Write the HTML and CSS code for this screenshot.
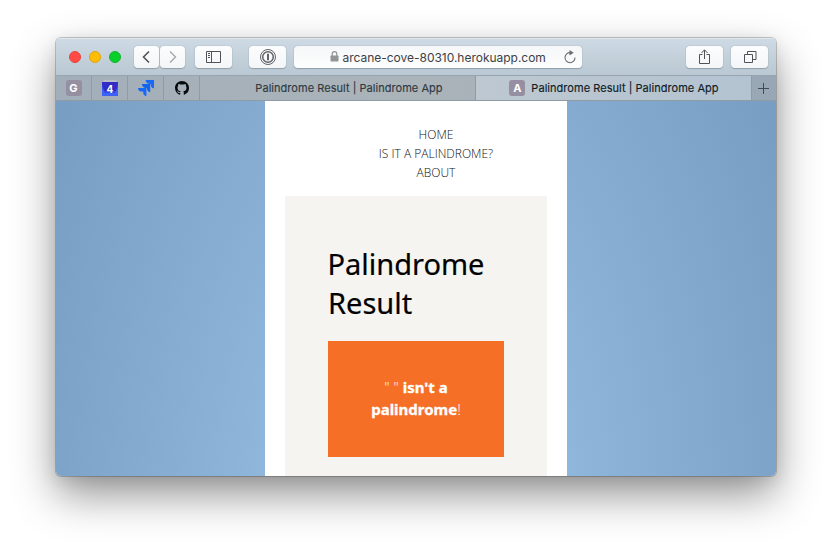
FILE: index.html
```html
<!DOCTYPE html>
<html lang="en">
<head>
<meta charset="utf-8">
<title>Palindrome Result | Palindrome App</title>
<link rel="stylesheet" href="styles.css">
</head>
<body>
<div class="window">
  <header class="toolbar">
    <div class="lights"><i class="light red"></i><i class="light yellow"></i><i class="light green"></i></div>
    <div class="nav-buttons">
      <span class="btn small"><svg width="26" height="22" fill="none" stroke="#4b4d50" stroke-width="1.5"><path d="M15 5.500 9.500 11l5.500 5.500"/></svg></span>
      <span class="btn small"><svg width="26" height="22" fill="none" stroke="#a6a8aa" stroke-width="1.400"><path d="M10 5.500 15.500 11 10 16.500"/></svg></span>
    </div>
    <span class="btn side"><svg width="37" height="22" fill="none" stroke="#505255"><path d="M11.500 5.500h14v11h-14zM16.500 5.500v11M13 7.500h2M13 9.500h2M13 11.500h2"/></svg></span>
    <span class="btn lock1"><svg width="37" height="22" fill="none" stroke="#606265"><circle cx="19" cy="11" r="7.500"/><circle cx="19" cy="11" r="5.300" stroke-width="1.500"/><path d="M19 7.800v6.400" stroke-width="2"/></svg></span>
    <div class="address">
      <svg class="padlock" width="9" height="11"><rect x=".5" y="4.500" width="8" height="6" rx=".7" fill="#929496"/><path d="M2.200 5V3a2.300 2.300 0 0 1 4.600 0v2" fill="none" stroke="#929496" stroke-width="1.200"/></svg>
      <span class="url">arcane-cove-80310.herokuapp.com</span>
      <svg class="reload" width="12" height="14"><path d="M6.500 2.700A5 5 0 1 0 11 7.500" fill="none" stroke="#696c6f" stroke-width="1.100"/><path d="M5.500 0l4.200 2.700L5.500 5.400z" fill="#696c6f"/></svg>
    </div>
    <div class="right-buttons">
      <span class="btn"><svg width="37" height="22" fill="none" stroke="#505255"><path d="M16.500 8.500h-3v9h10v-9h-3M18.500 13V4M15.500 7l3-3.200 3 3.200"/></svg></span>
      <span class="btn"><svg width="37" height="22" fill="none" stroke="#505255"><path d="M13.500 8.500h8v8h-8zM16.500 8V5.500h8.500v8h-3"/></svg></span>
    </div>
  </header>
  <nav class="tabs">
    <div class="pin"><span class="letter">G</span></div>
    <div class="pin"><svg width="16" height="16"><path d="M0 2h16v14H0z" fill="#3548e8"/><path d="M0 2h16l-2 9H2z" fill="#342bc5"/><path d="M0 16V7l3 6h10l3-6v9z" fill="#3e62f5"/><path d="M2 0h12l1 2H1z" fill="#b8bec8"/><text x="8" y="12.600" text-anchor="middle" class="four">4</text></svg></div>
    <div class="pin"><svg width="16" height="16" fill="#1769fb"><path d="M7.600 0H16v8.400c-1.900-.2-3.200-1.500-3.200-3.700V3.900h-1.200C9.200 3.900 7.700 2.300 7.600 0z"/><path d="M3.900 4h8.300v8.300c-1.900-.2-3.200-1.500-3.200-3.700V7.900H7.800C5.500 7.900 4 6.400 3.900 4z" fill="#1263ee"/><path d="M0 7.900h8.400V16c-1.900-.2-3.200-1.400-3.200-3.600v-.8H4C1.600 11.600.100 10.200 0 7.900z"/></svg></div>
    <div class="pin"><svg width="14" height="14" viewBox="0 0 16 16"><path fill="#080b0e" d="M8 0C3.580 0 0 3.580 0 8c0 3.540 2.290 6.530 5.470 7.590.4.070.55-.17.55-.38 0-.19-.01-.82-.01-1.490-2.010.37-2.530-.49-2.690-.94-.09-.23-.48-.94-.82-1.130-.28-.15-.68-.52-.01-.53.63-.01 1.080.58 1.230.82.72 1.210 1.870.87 2.330.66.07-.52.28-.87.51-1.070-1.780-.2-3.640-.89-3.640-3.950 0-.87.31-1.590.82-2.150-.08-.2-.36-1.020.08-2.120 0 0 .67-.21 2.200.82.64-.18 1.320-.27 2-.27s1.360.09 2 .27c1.530-1.040 2.200-.82 2.200-.82.44 1.100.16 1.920.08 2.120.51.56.82 1.270.82 2.150 0 3.070-1.870 3.750-3.650 3.950.29.25.54.73.54 1.480 0 1.070-.01 1.930-.01 2.200 0 .21.15.46.55.38A8 8 0 0 0 16 8c0-4.420-3.580-8-8-8z"/></svg></div>
    <div class="tab first"><span class="label">Palindrome Result | Palindrome App</span></div>
    <div class="tab active"><span class="letter">A</span><span class="label">Palindrome Result | Palindrome App</span></div>
    <div class="plus"><svg width="11" height="11"><path d="M5.500 0v11M0 5.500h11" stroke="#414b55"/></svg></div>
  </nav>
  <main class="viewport">
    <div class="page">
      <ul class="menu"><li>HOME</li><li>IS IT A PALINDROME?</li><li>ABOUT</li></ul>
      <section class="content">
        <h1>Palindrome<br>Result</h1>
        <div class="result">" " <b>isn't a<br>palindrome</b>!</div>
      </section>
    </div>
  </main>
</div>
</body>
</html>
```

FILE: styles.css
```css
* { box-sizing: border-box; }
body { margin: 0; height: 550px; padding: 38px 56px 0; overflow: hidden; background: #fff; font-family: Inter, "Liberation Sans", sans-serif; }
svg { display: block; flex: none; }
.window { width: 720px; height: 438px; border-radius: 5px; overflow: hidden; display: flex; flex-direction: column; box-shadow: 0 0 0 1px rgba(0,0,0,.2), 0 19px 44px rgba(0,0,0,.42), 0 4px 16px rgba(0,0,0,.1); }
.toolbar { height: 37px; flex: none; display: flex; align-items: center; padding: 0 8px 0 13px; background: linear-gradient(#cedae4, #bac8d3); box-shadow: inset 0 1px #e0e7ed; }
.lights { display: flex; gap: 8px; width: 65px; }
.light { width: 12px; height: 12px; border-radius: 50%; border: 1px solid; }
.red { background: #ff4b43; border-color: #e54640; }
.yellow { background: #ffbd05; border-color: #dfa414; }
.green { background: #09cf2b; border-color: #13b52c; }
.nav-buttons { display: flex; }
.btn { width: 37px; height: 22px; border-radius: 4px; background: linear-gradient(#fdfdfe, #f3f5f6); box-shadow: 0 0 1px rgba(60,75,90,.55), 0 1px 1px rgba(60,75,90,.3); }
.small { width: 25px; overflow: hidden; }
.small + .small { margin-left: 1px; }
.side { margin-left: 10px; }
.lock1 { margin: 0 8px 0 17px; }
.address { width: 288px; height: 22px; border-radius: 4px; display: flex; align-items: center; padding: 0 6px 0 35.5px; background: linear-gradient(#f5f7f8, #fdfefe); box-shadow: 0 0 1px rgba(60,75,90,.55), 0 1px 1px rgba(60,75,90,.3); }
.url { margin: 1px 0 0 4px; font-size: 12px; letter-spacing: -.02px; color: #3e4144; white-space: nowrap; }
.reload { margin-left: auto; }
.right-buttons { display: flex; gap: 8px; margin-left: auto; }
.tabs { height: 26px; flex: none; display: flex; border-top: 1px solid #97a5b2; border-bottom: 1px solid #8f9ba5; background: linear-gradient(90deg, #a2aeb9, #abb4b9 50%, #98a7b5); }
.pin { width: 36px; border-right: 1px solid #8f9ca8; display: flex; align-items: center; justify-content: center; }
.letter { width: 16px; height: 16px; border-radius: 3px; background: #968fa2; color: #fff; font-size: 11px; font-weight: 700; line-height: 16px; text-align: center; }
.four { font: 700 10px Inter, sans-serif; fill: #fff; }
.tab { width: 276px; display: flex; align-items: center; justify-content: center; border-right: 1px solid #8f9ca8; color: #303a43; }
.first { padding-left: 23px; }
.active { background: linear-gradient(90deg, #bdc8d1, #b3c3d0); color: #101c26; gap: 6px; padding-left: 1px; }
.label { font-size: 11px; font-weight: 400; letter-spacing: .04px; white-space: nowrap; -webkit-text-stroke: .15px currentColor; }
.plus { flex: 1; display: flex; align-items: center; justify-content: center; padding-right: 1px; }
.viewport { flex: 1; display: flex; justify-content: center; background: radial-gradient(ellipse 430px 800px at 50% 430px, #93badf 25%, #789dc2 100%); }
.page { width: 302px; background: #fff; padding: 24px 20px 0; display: flex; flex-direction: column; }
.menu { list-style: none; margin: 0 0 14px; padding: 0 0 0 40px; text-align: center; font: 300 12px/19px "Open Sans", sans-serif; color: #111; }
.content { flex: 1; background: #f5f4f0; padding: 48px 43px 0; }
h1 { margin: 0 0 19px; font: 400 29px/39px "Noto Sans", sans-serif; color: #000; text-indent: -.5px; -webkit-text-stroke: .2px #000; }
.result { height: 116px; background: #f66f27; padding-top: 35px; text-align: center; color: #fff; font: 300 15px/22px "Open Sans", sans-serif; }
.result b { font-family: "Noto Sans", sans-serif; font-weight: 700; -webkit-text-stroke: .3px #fff; }
```
